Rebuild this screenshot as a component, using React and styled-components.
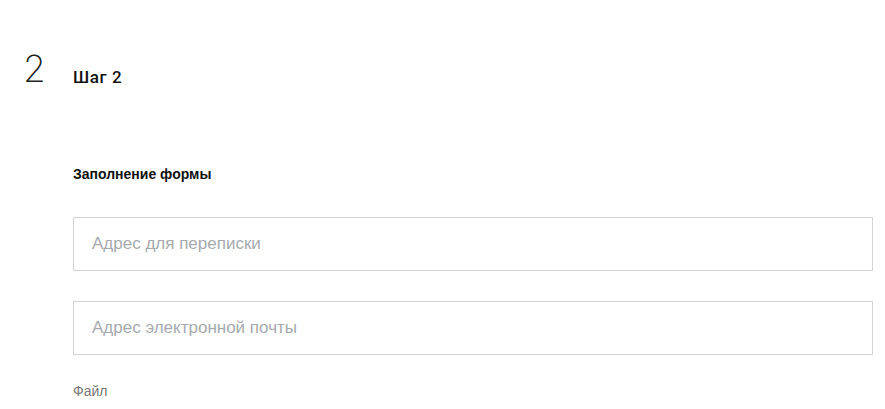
import React from 'react';
import styled, { createGlobalStyle } from 'styled-components';

const Global = createGlobalStyle`
  body {
    margin: 0;
    background: #fff;
    font-family: "Liberation Sans", Arial, sans-serif;
  }
`;

const Page = styled.div`
  width: 885px;
  height: 409px;
  overflow: hidden;
  padding-top: 49px;
  box-sizing: border-box;
`;

const StepHead = styled.div`
  display: flex;
  align-items: flex-end;
  height: 38px;
`;

const StepNumber = styled.div`
  flex: 0 0 73px;
  padding-left: 23px;
  box-sizing: border-box;
  font-family: Inter, "Liberation Sans", sans-serif;
  font-weight: 200;
  font-size: 37px;
  line-height: 37px;
  color: #222;
`;

const StepTitle = styled.div`
  font-family: Roboto, "Liberation Sans", sans-serif;
  font-weight: 500;
  font-size: 17px;
  line-height: 17px;
  letter-spacing: 0.6px;
  color: #111;
  margin-bottom: 1px;
`;

const Form = styled.div`
  padding: 0 12px 0 73px;
  margin-top: 79px;
  display: flex;
  flex-direction: column;
`;

const SectionTitle = styled.div`
  font-weight: 700;
  font-size: 14px;
  line-height: 16px;
  color: #111;
  margin-bottom: 35px;
`;

const Field = styled.input`
  width: 800px;
  height: 54px;
  box-sizing: border-box;
  border: 1px solid #d3d3d3;
  padding: 0 18px;
  font-family: "Liberation Sans", Arial, sans-serif;
  font-size: 17px;
  color: #333;
  outline: none;
  margin-bottom: ${p => p.$gap}px;
  &::placeholder {
    color: #a6aaae;
  }
`;

const FileLabel = styled.div`
  font-size: 14px;
  line-height: 16px;
  color: #777;
`;

export default function App() {
  return (
    <>
      <Global />
      <Page>
        <StepHead>
          <StepNumber>2</StepNumber>
          <StepTitle>Шаг 2</StepTitle>
        </StepHead>
        <Form>
          <SectionTitle>Заполнение формы</SectionTitle>
          <Field placeholder="Адрес для переписки" $gap={30} />
          <Field placeholder="Адрес электронной почты" $gap={28} />
          <FileLabel>Файл</FileLabel>
        </Form>
      </Page>
    </>
  );
}
